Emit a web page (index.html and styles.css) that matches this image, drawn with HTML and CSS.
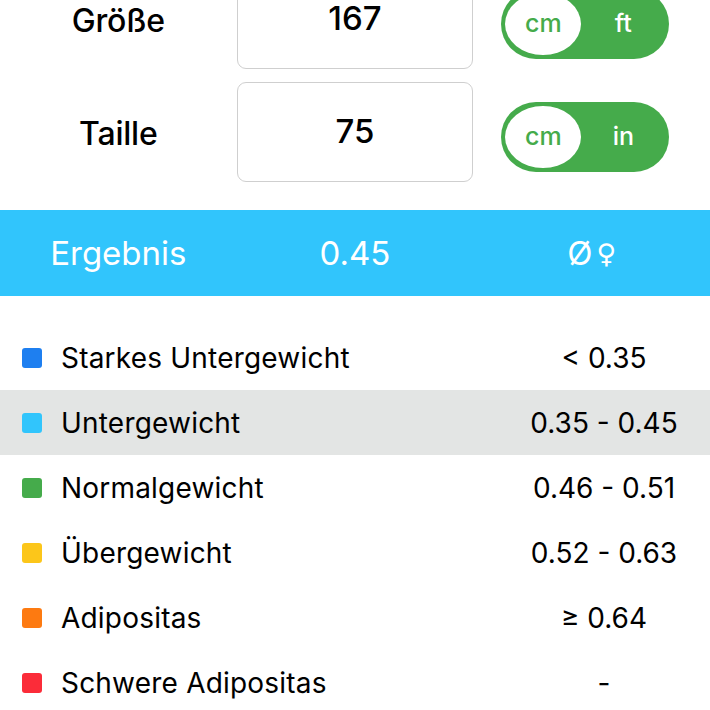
FILE: index.html
```html
<!DOCTYPE html>
<html lang="de">
<head>
<meta charset="utf-8">
<link rel="stylesheet" href="styles.css">
</head>
<body>
<div class="form">
  <div class="row">
    <div class="label">Größe</div>
    <div class="field">167</div>
    <div class="toggle-cell">
      <div class="toggle"><span class="knob">cm</span><span class="alt">ft</span></div>
    </div>
  </div>
  <div class="row">
    <div class="label">Taille</div>
    <div class="field">75</div>
    <div class="toggle-cell">
      <div class="toggle"><span class="knob">cm</span><span class="alt">in</span></div>
    </div>
  </div>
</div>
<div class="result">
  <div>Ergebnis</div>
  <div>0.45</div>
  <div class="sym">Ø<span class="venus">♀</span></div>
</div>
<ul class="legend">
  <li><span class="sq blue"></span><span class="name">Starkes Untergewicht</span><span class="val">&lt; 0.35</span></li>
  <li class="active"><span class="sq cyan"></span><span class="name">Untergewicht</span><span class="val">0.35 - 0.45</span></li>
  <li><span class="sq green"></span><span class="name">Normalgewicht</span><span class="val">0.46 - 0.51</span></li>
  <li><span class="sq yellow"></span><span class="name">Übergewicht</span><span class="val">0.52 - 0.63</span></li>
  <li><span class="sq orange"></span><span class="name">Adipositas</span><span class="val">≥ 0.64</span></li>
  <li><span class="sq red"></span><span class="name">Schwere Adipositas</span><span class="val">-</span></li>
</ul>
</body>
</html>
```

FILE: styles.css
```css
html, body {
  margin: 0;
  padding: 0;
  background: #fff;
  overflow: hidden;
}
body {
  font-family: "Inter", "Liberation Sans", sans-serif;
  color: #000;
  height: 710px;
}
.form {
  margin-top: -31px;
  padding-bottom: 28px;
  display: flex;
  flex-direction: column;
  gap: 13px;
}
.row {
  display: grid;
  grid-template-columns: 1fr 1fr 1fr;
  height: 100px;
}
.label {
  display: flex;
  align-items: center;
  justify-content: center;
  font-size: 32px;
  font-weight: 500;
  line-height: 1;
  padding-top: 3px;
  letter-spacing: -0.2px;
}
.field {
  border: 1px solid #cfcfcf;
  border-radius: 9px;
  display: flex;
  align-items: center;
  justify-content: center;
  font-size: 33px;
  font-weight: 500;
  line-height: 1;
  padding-bottom: 2px;
  box-sizing: border-box;
}
.toggle-cell {
  display: flex;
  align-items: center;
  justify-content: flex-start;
  padding-left: 28px;
  padding-top: 9px;
}
.toggle {
  width: 168px;
  height: 70px;
  border-radius: 35px;
  background: #45ab4b;
  display: flex;
  align-items: center;
  padding: 0 4px;
  box-sizing: border-box;
  font-size: 25px;
  font-weight: 500;
}
.knob {
  width: 76px;
  height: 62px;
  border-radius: 50%;
  background: #fff;
  color: #45ab4b;
  display: flex;
  align-items: center;
  justify-content: center;
  padding-bottom: 2px;
  box-sizing: border-box;
}
.alt {
  flex: 1;
  text-align: center;
  color: #fff;
  padding-bottom: 2px;
}
.result {
  height: 86px;
  background: #31c5fc;
  color: #fff;
  display: grid;
  grid-template-columns: 1fr 1fr 1fr;
  align-items: center;
  justify-items: center;
  font-size: 33px;
}
.sym {
  display: flex;
  align-items: center;
  gap: 4px;
}
.venus {
  font-family: "DejaVu Sans", sans-serif;
  font-size: 27px;
}
.legend {
  list-style: none;
  margin: 0;
  padding: 29px 0 0 0;
}
.legend li {
  height: 65px;
  display: grid;
  grid-template-columns: 22px 20px 19px 1fr 212px;
  align-items: center;
  font-size: 28px;
}
.legend li.active {
  background: #e3e5e4;
}
.sq {
  grid-column: 2;
  width: 20px;
  height: 20px;
  border-radius: 3px;
}
.name {
  grid-column: 4;
  letter-spacing: 0.2px;
}
.val {
  grid-column: 5;
  text-align: center;
}
.blue { background: #1e7ff0; }
.cyan { background: #31c5fc; }
.green { background: #45ab4b; }
.yellow { background: #fcc61a; }
.orange { background: #fd7a11; }
.red { background: #fb2c39; }
```
